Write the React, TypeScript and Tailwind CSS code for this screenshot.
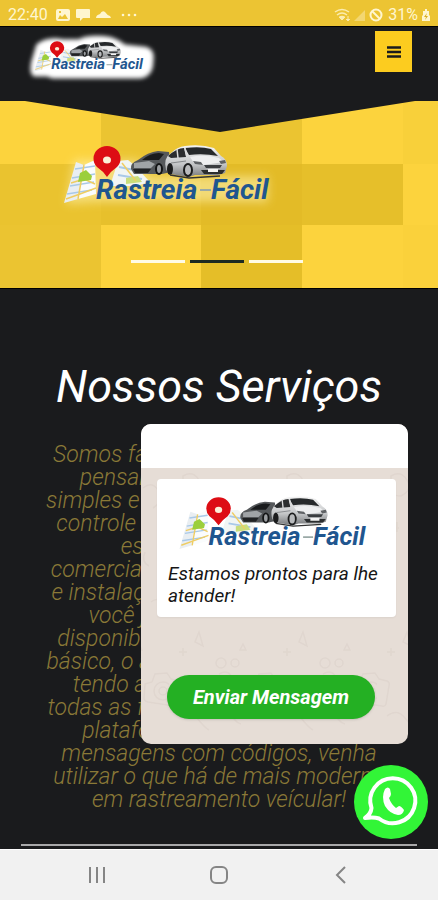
import { useState } from "react";

const tiles = [
  "bg-[#fcd33d]", "bg-[#ebc431]", "bg-[#ebc431]", "bg-[#fcd33d]", "bg-[#f8d03a]",
  "bg-[#eac32f]", "bg-[#e7c02c]", "bg-[#e3bb27]", "bg-[#e6bf2a]", "bg-[#fcd33d]",
  "bg-[#ebc431]", "bg-[#fcd33d]", "bg-[#e5be28]", "bg-[#fcd33d]", "bg-[#fad13b]",
];

const lines = [
  "Somos fascinados por tecnologia,",
  "pensamos em um programa",
  "simples e completo, para você ter o",
  "controle total do seu automóvel e",
  "especial para frotas,",
  "comerciais. Oferecemos o suporte",
  "e instalação em toda nossa região",
  "você já recebe o aplicativo,",
  "disponibilizado desde já no plano",
  "básico, o acesso é muito simples, e",
  "tendo acesso pelo seu celular,",
  "todas as funções disponíveis nesta",
  "plataforma, sem precisar de",
  "mensagens com códigos, venha",
  "utilizar o que há de mais moderno",
  "em rastreamento veícular!",
];

function Logo({ className, glow }: { className: string; glow: "solid" | "soft" | "none" }) {
  return (
    <svg viewBox="0 0 220 80" className={`block overflow-visible ${className}`} role="img" aria-label="Rastreia-Fácil">
      <defs>
        <filter id={`blur-${glow}`} x="-20%" y="-30%" width="140%" height="160%">
          <feGaussianBlur stdDeviation={glow === "solid" ? 4 : 5} />
        </filter>
        <linearGradient id="silver" x1="0" y1="0" x2="0" y2="1">
          <stop offset="0" stopColor="#f4f4f4" />
          <stop offset="0.6" stopColor="#c4c6c8" />
          <stop offset="1" stopColor="#77797b" />
        </linearGradient>
      </defs>

      {glow === "solid" && (
        <path
          d="M10 16Q30 0 60 6L90 6Q112-4 150 2Q168 8 176 16L215 20Q234 24 230 48Q230 76 206 80H40L30 76H6Q-4 74 0 50Z"
          fill="#fff"
          filter="url(#blur-solid)"
        />
      )}
      {glow === "soft" && (
        <path d="M16 24H80L92 40H210V66H38L8 68Z" fill="#fff4b8" opacity="0.55" filter="url(#blur-soft)" />
      )}

      {/* folded map */}
      <path d="M18 26L26 29L20 63L6 67Z" fill="#e9eef2" />
      <path d="M26 29L37 24L38 58L20 63Z" fill="#fafcfd" />
      <path d="M60 25L70 24L76 29L92 46L78 50H52Z" fill="#f1f5f4" />
      <path d="M17 33L37 30M14 42L37 38M12 50L36 46M9 58L34 54" stroke="#a9c9e8" strokeWidth="1.5" fill="none" />
      <path d="M13 47L26 43L37 48M8 63L22 58L38 52M26 29L20 63" stroke="#efcd63" strokeWidth="1.5" fill="none" />
      <path d="M22 37L28 34L34 40L33 44L20 46Z" fill="#9bcf3c" />
      <path d="M61 31L76 34M60 39L84 43" stroke="#a9c9e8" strokeWidth="2" />
      <path d="M68 42L80 40L84 46L68 48Z" fill="#c9dd7b" />
      <path d="M64 27L78 45" stroke="#efcd63" strokeWidth="1.5" />

      {/* rear car */}
      <path d="M73 33Q72 27 80 24Q90 16 100 15L111 16L113 36L104 38H76Z" fill="#55585b" />
      <path d="M84 24Q92 17 101 17L106 18L101 24Z" fill="#191b1d" />
      <path d="M76 27L91 25L97 28L93 32H76Z" fill="#a0a4a7" />
      <path d="M75 33H93L90 37H77Z" fill="#202224" />
      <ellipse cx="101" cy="33" rx="4" ry="6" fill="#131415" />
      <ellipse cx="101" cy="33" rx="2" ry="4" fill="#9a9da0" />

      {/* front car */}
      <path
        d="M108 34Q105 22 113 17Q119 11 127 10Q143 8 156 12L163 20Q169 23 169 30L167 37L160 39H137L131 41L112 38Z"
        fill="url(#silver)"
      />
      <path d="M110 20Q119 12 126 12L128 21L113 22Z" fill="#2b2d2f" />
      <path d="M127 12Q143 10 153 13L160 20Q145 17 131 19Z" fill="#26292b" />
      <path d="M119 13L120 22M127 12L129 21" stroke="#d9dadb" strokeWidth="1.5" />
      <path d="M132 21Q146 18 161 22L166 26L146 29L136 27Z" fill="#eeeff0" />
      <path d="M135 25L143 26L145 29L137 28ZM161 25L167 24L168 27L163 28Z" fill="#5f6265" />
      <path d="M146 29H164L162 32H148Z" fill="#3a3d40" />
      <path d="M143 34H167L164 38H146Z" fill="#2b2d2f" />
      <path d="M150 33H160V36H150Z" fill="#f4f4f4" />
      <path d="M113 27L128 25" stroke="#84878a" strokeWidth="1" />
      <ellipse cx="112" cy="33" rx="3" ry="6" fill="#1b1c1d" />
      <ellipse cx="130" cy="34" rx="5" ry="7" fill="#1b1c1d" />
      <ellipse cx="130" cy="34" rx="3" ry="5" fill="#b9bbbd" />
      <path d="M112 39L131 42L162 40" stroke="#333" strokeWidth="1.5" fill="none" />

      {/* pin */}
      <path d="M49 41Q45 35 39 31A13.500 12.500 0 1 1 59 31Q53 35 49 41Z" fill="#dd0d14" />
      <ellipse cx="49" cy="24" rx="4" ry="3.500" fill="#fbf0d8" />

      <g
        fontFamily="Roboto, sans-serif"
        fontStyle="italic"
        fontWeight="700"
        fontSize="28"
        fill="#1f568f"
      >
        <text x="38" y="63">Rastreia</text>
        <text x="153" y="63">Fácil</text>
      </g>
      <path d="M142 54H153" stroke="#9aa9a6" strokeWidth="2" />
    </svg>
  );
}

function StatusBar() {
  return (
    <div className="flex h-[26px] items-center justify-between bg-[#ecc433] px-2 pt-1 text-base text-[#fff6cf]">
      <div className="flex items-center gap-2">
        <span>22:40</span>
        <svg viewBox="0 0 84 14" className="h-3.5 w-[84px]" fill="currentColor" aria-hidden="true">
          <path
            fillRule="evenodd"
            d="M2 1H12Q14 1 14 3V11Q14 13 12 13H2Q0 13 0 11V3Q0 1 2 1ZM2 11H12L9 6L6 9L4 7ZM3 3V5H5V3Z"
          />
          <path d="M21 1H33Q34 1 34 2V10H27L24 13V10H21Q20 10 20 9V2Q20 1 21 1Z" />
          <path d="M40 10Q40 7 44 6Q46 2 49 4Q51 7 54 8L55 10Z" />
          <circle cx="67" cy="7" r="1.300" />
          <circle cx="73" cy="7" r="1.300" />
          <circle cx="79" cy="7" r="1.300" />
        </svg>
      </div>
      <div className="flex items-center gap-1">
        <svg viewBox="0 0 50 14" className="h-3.5 w-[50px]" fill="none" stroke="currentColor" aria-hidden="true">
          <g opacity="0.8">
            <path d="M1 4Q8-1 15 4M3 7Q8 3 13 7M6 9Q8 8 10 9" strokeWidth="1.500" />
            <path d="M8 12L5 9H11ZM14 8V13M12 11L14 13L16 11" fill="currentColor" strokeWidth="1" />
          </g>
          <path d="M20 13L31 2V13Z" fill="currentColor" stroke="none" opacity="0.4" />
          <circle cx="42" cy="7" r="5.500" strokeWidth="2" />
          <path d="M38 3L46 11" strokeWidth="2" />
        </svg>
        <span>31%</span>
        <svg viewBox="0 0 8 14" className="h-3.5 w-2" fill="currentColor" aria-hidden="true">
          <path d="M3 1H5V3H7V7L8 8V13H0V8L1 7V3H3Z" />
          <path d="M5 5L2 9H4L3 12L6 8H4Z" fill="#d9ae20" />
        </svg>
      </div>
    </div>
  );
}

function Hero() {
  const [slide, setSlide] = useState(1);

  return (
    <div className="relative h-[188px]">
      <div className="absolute inset-0 grid grid-cols-[23fr_23fr_23fr_23fr_8fr] grid-rows-[64px_61px_63px]">
        {tiles.map((color, i) => (
          <div key={i} className={color} />
        ))}
      </div>
      <svg
        viewBox="0 0 438 32"
        preserveAspectRatio="none"
        className="absolute inset-x-0 top-0 h-8 w-full"
        aria-hidden="true"
      >
        <path d="M0 0H438V1H415L220 32L25 1H0Z" fill="#1a1b1d" />
      </svg>
      <div className="relative flex h-full flex-col justify-between pb-[25px] pt-9">
        <Logo className="ml-[58px] w-[220px]" glow="soft" />
        <div className="flex justify-center gap-[5px] pr-1">
          {[0, 1, 2].map((n) => (
            <button
              key={n}
              onClick={() => setSlide(n)}
              aria-label={`Slide ${n + 1}`}
              className={`h-[3px] w-[54px] ${slide === n ? "bg-[#1d2a22]" : "bg-[#fffbe6]"}`}
            />
          ))}
        </div>
      </div>
    </div>
  );
}

function Doodles() {
  return (
    <svg className="absolute inset-0 h-full w-full" aria-hidden="true">
      <defs>
        <pattern id="doodles" width="104" height="276" patternUnits="userSpaceOnUse" x="28" y="-6">
          <g fill="none" stroke="#dacfc8" strokeWidth="1.500" opacity="0.5">
            <path d="M4 222L11 220L14 212L26 211L30 217L38 219Q41 220 40 224L37 242Q36 245 33 244L7 240Q3 239 3 236Z" transform="translate(76 0)" />
            <path d="M4 222L11 220L14 212L26 211L30 217L38 219Q41 220 40 224L37 242Q36 245 33 244L7 240Q3 239 3 236Z" transform="translate(-28 0)" />
            <circle cx="98" cy="229" r="9" />
            <circle cx="98" cy="229" r="4" />
            <circle cx="52" cy="201" r="5" />
            <circle cx="66" cy="201" r="4" />
            <path d="M30 170L34 184L26 180ZM74 182L77 188H71ZM14 186V194M10 190H18" />
            <path d="M50 212Q60 206 64 218T76 232M46 240Q56 232 60 246T72 262M10 254Q20 246 28 256T40 268" />
            <path d="M14 14Q24 8 30 18Q36 28 24 34Q12 34 14 24ZM66 60L69 66H63ZM20 60V70M17 66H22" />
            <path d="M78 26Q88 18 94 30Q98 40 88 46M80 90Q76 100 84 104M86 140Q96 132 98 150" />
          </g>
        </pattern>
      </defs>
      <rect width="100%" height="100%" fill="url(#doodles)" />
    </svg>
  );
}

function ChatPopup() {
  return (
    <div className="absolute right-[30px] top-[135px] w-[267px] overflow-hidden rounded-[10px] bg-[#e6ddd6]">
      <div className="h-11 bg-white" />
      <div className="relative px-4 pb-[25px] pt-[11px]">
        <Doodles />
        <div className="relative -mr-1 rounded bg-white px-[11px] pb-2.5 pt-[9px] shadow-xs">
          <Logo className="ml-[6px] w-[200px]" glow="none" />
          <p className="mt-0.5 text-[19px] leading-[22px] text-[#161616]">Estamos prontos para lhe atender!</p>
        </div>
        <button className="relative ml-2.5 mt-[58px] block h-11 w-52 rounded-full bg-[#24b023] text-xl font-bold italic text-white shadow-sm">
          Enviar Mensagem
        </button>
      </div>
    </div>
  );
}

export default function App() {
  return (
    <div className="min-h-screen bg-[#1a1b1d] font-['Roboto',sans-serif]">
      <StatusBar />

      <header className="flex h-[74px] items-start justify-between border-t border-black pl-[31px] pr-[26px]">
        <Logo className="mt-[9px] w-[117px]" glow="solid" />
        <button aria-label="Menu" className="mt-1 flex h-[41px] w-[37px] items-center justify-center bg-[#fccc1f]">
          <svg viewBox="0 0 14 12" className="h-3 w-3.5" aria-hidden="true">
            <path d="M0 1.500H14M0 6H14M0 10.500H14" stroke="#1a1b1d" strokeWidth="2.500" />
          </svg>
        </button>
      </header>

      <Hero />

      <section className="relative border-t border-black pb-[3px] pt-[70px] text-center italic">
        <h1 className="text-[45px] leading-14 text-white">Nossos Serviços</h1>
        <p className="mt-[28px] whitespace-nowrap text-[23px] font-light leading-[23px] text-[#8a7937]">
          {lines.map((line) => (
            <span key={line} className="block">
              {line}
            </span>
          ))}
        </p>
        <hr className="mx-[21px] mt-[33px] border-t-2 border-[#a9a9aa]" />

        <div className="text-left">
          <ChatPopup />
        </div>
        <a
          href="#whatsapp"
          aria-label="WhatsApp"
          className="absolute bottom-2.5 right-2.5 flex size-[74px] items-center justify-center rounded-full bg-[#32f537]"
        >
          <svg viewBox="0 0 74 74" className="size-full" fill="none" aria-hidden="true">
            <path
              d="M17.500 43A22.500 22.500 0 1 1 25 53.500Q20 52 11 53Q17 49 17.500 43Z"
              stroke="#fff"
              strokeWidth="4"
              strokeLinejoin="round"
            />
            <path
              d="M31 24Q34 21 36 24L37 29Q37 31 35 33Q37 39 42 43L45 41Q47 41 50 45Q49 50 44 50Q36 49 31 41Q27 32 31 24Z"
              fill="#fff"
            />
          </svg>
        </a>
      </section>

      <nav className="flex h-[51px] items-center border-t border-white bg-[#f1f1f1] px-9 text-[#858585]">
        <button aria-label="Recentes" className="flex flex-1 justify-center">
          <svg viewBox="0 0 18 18" className="size-[18px]" stroke="currentColor" strokeWidth="2" aria-hidden="true">
            <path d="M2 1V17M9 1V17M16 1V17" />
          </svg>
        </button>
        <button aria-label="Início" className="flex flex-1 justify-center">
          <svg viewBox="0 0 18 18" className="size-[18px]" fill="none" stroke="currentColor" strokeWidth="2" aria-hidden="true">
            <rect x="1" y="1" width="16" height="16" rx="5" />
          </svg>
        </button>
        <button aria-label="Voltar" className="flex flex-1 justify-center">
          <svg viewBox="0 0 18 18" className="size-[18px]" fill="none" stroke="currentColor" strokeWidth="2" aria-hidden="true">
            <path d="M13 1L5 9L13 17" />
          </svg>
        </button>
      </nav>
    </div>
  );
}
